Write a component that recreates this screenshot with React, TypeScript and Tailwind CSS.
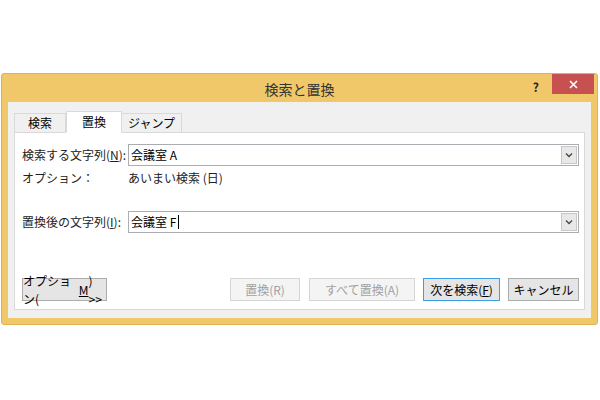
export default function App() {
  const f = { fontFamily: '"Noto Sans CJK JP", sans-serif' };
  const Combo = ({ text, caret }: { text: string; caret?: boolean }) => (
    <div className="flex-1 h-[22px] border border-[#abadb3] bg-white flex items-center">
      <div className="flex-1 pl-[2px] text-[12px] text-black flex items-center">
        {text}
        {caret && <span className="inline-block w-[1px] h-[14px] bg-black ml-[2px]" />}
      </div>
      <div className="w-[16px] h-[18px] mr-[1px] border border-[#c7c7c7] bg-[#e8e8e8] flex items-center justify-center">
        <svg width="8" height="6" viewBox="0 0 8 6"><path d="M1 1.5 L4 4.5 L7 1.5" stroke="#444" strokeWidth="1.3" fill="none" /></svg>
      </div>
    </div>
  );
  const Btn = ({ children, w, dis, focus }: { children: React.ReactNode; w: string; dis?: boolean; focus?: boolean }) => (
    <div className={`${w} h-[23px] flex items-center justify-center text-[12px] border ${dis ? "border-[#d5d5d5] bg-[#f4f4f4] text-[#a0a0a0]" : focus ? "border-[#3c9fe6] bg-[#e5e5e5] text-black" : "border-[#acacac] bg-[#e5e5e5] text-black"}`}>{children}</div>
  );
  return (
    <div className="w-[600px] h-[400px] bg-white relative" style={f}>
      <div className="absolute left-[1px] top-[73px] w-[597px] h-[252px] bg-[#f0c869] border border-[#e0b350] rounded-[3px] flex flex-col">
        <div className="h-[28px] flex items-start relative">
          <div className="flex-1 text-center text-[14px] text-[#333] pt-[5px]">検索と置換</div>
          <div className="absolute right-[58px] top-[4px] text-[12px] font-bold text-[#222]">?</div>
          <div className="absolute right-[3px] top-0 w-[42px] h-[20px] bg-[#c75050] flex items-center justify-center">
            <svg width="9" height="9" viewBox="0 0 9 9"><path d="M1 1 L8 8 M8 1 L1 8" stroke="white" strokeWidth="1.6" /></svg>
          </div>
        </div>
        <div className="mx-[6px] mb-[6px] flex-1 bg-[#f0f0f0] px-[6px] pt-[8px] pb-[8px] flex flex-col">
          <div className="flex items-end h-[22px] text-[12px] relative z-10">
            <div className="h-[19px] px-[13px] border border-[#d9d9d9] border-b-0 bg-[#f0f0f0] flex items-center">検索</div>
            <div className="h-[22px] px-[15px] border border-[#d9d9d9] border-b-white bg-white flex items-center -mb-[1px]">置換</div>
            <div className="h-[19px] px-[6px] border border-[#d9d9d9] border-b-0 border-l-0 bg-[#f0f0f0] flex items-center">ジャンプ</div>
          </div>
          <div className="flex-1 bg-white border border-[#d9d9d9] pl-[7px] pr-[5px] pt-[11px] flex flex-col text-[12px] text-[#222]">
            <div className="flex items-center">
              <div className="w-[106px]">検索する文字列(<u>N</u>):</div>
              <Combo text="会議室 A" />
            </div>
            <div className="flex items-center mt-[4px] h-[16px]">
              <div className="w-[106px]">オプション：</div>
              <div>あいまい検索 (日)</div>
            </div>
            <div className="flex items-center mt-[25px]">
              <div className="w-[106px]">置換後の文字列(<u>I</u>):</div>
              <Combo text="会議室 F" caret />
            </div>
            <div className="flex items-center mt-[45px]">
              <Btn w="w-[85px]">オプション(<u>M</u>) &gt;&gt;</Btn>
              <div className="flex-1" />
              <Btn w="w-[70px]" dis>置換(R)</Btn>
              <div className="w-[9px]" />
              <Btn w="w-[106px]" dis>すべて置換(A)</Btn>
              <div className="w-[8px]" />
              <Btn w="w-[77px]" focus>次を検索(<u>F</u>)</Btn>
              <div className="w-[8px]" />
              <Btn w="w-[71px]">キャンセル</Btn>
            </div>
          </div>
        </div>
      </div>
    </div>
  );
}
